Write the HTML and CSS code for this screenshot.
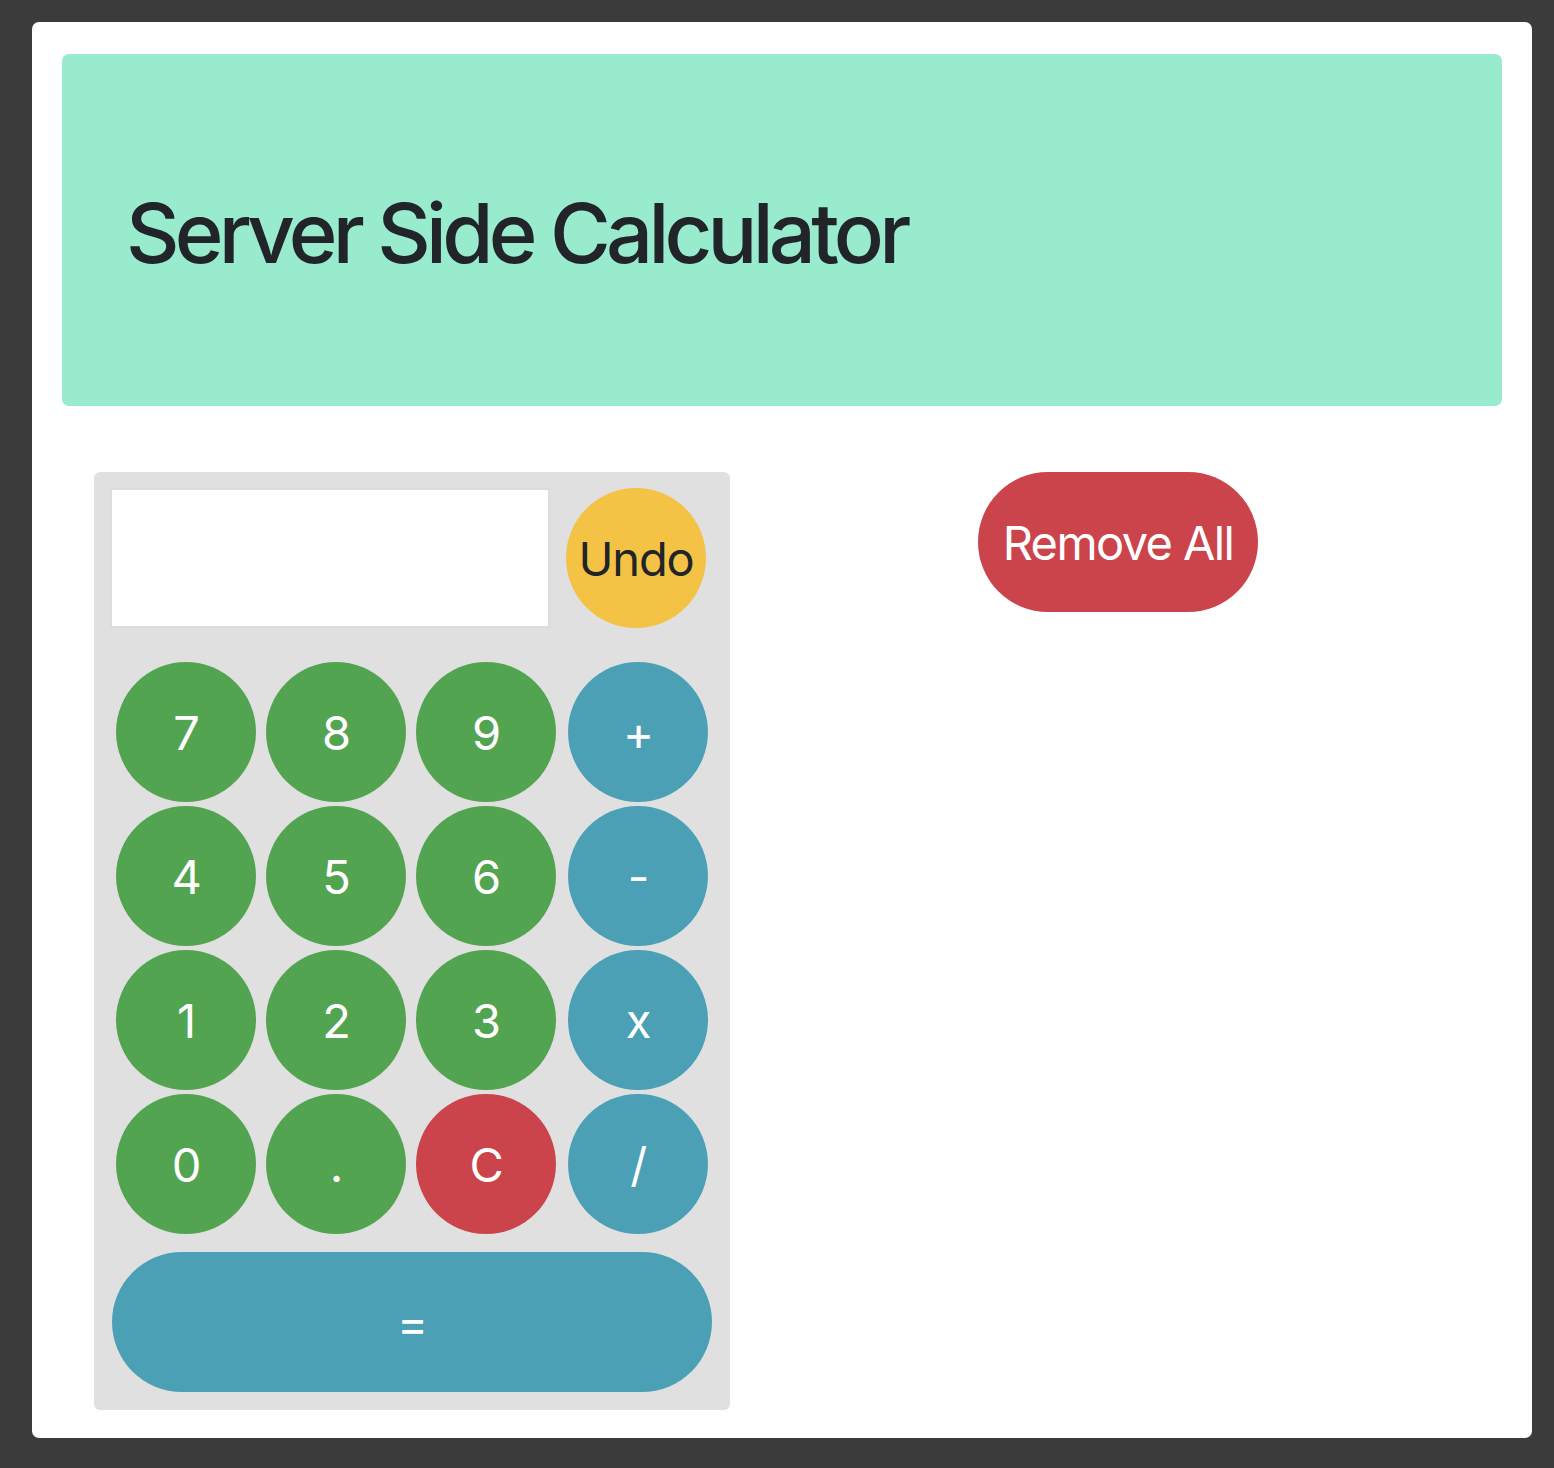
FILE: index.html
```html
<!DOCTYPE html>
<html lang="en">
<head>
<meta charset="utf-8">
<title>Server Side Calculator</title>
<link rel="stylesheet" href="styles.css">
</head>
<body>
<div class="page">
  <header class="jumbotron">
    <h1 class="title">Server Side Calculator</h1>
  </header>
  <main class="content">
    <section class="calc">
      <div class="top-row">
        <input class="display" type="text" aria-label="display">
        <button class="btn circle yellow">Undo</button>
      </div>
      <div class="keys">
        <button class="btn circle green">7</button>
        <button class="btn circle green">8</button>
        <button class="btn circle green">9</button>
        <button class="btn circle blue">+</button>
        <button class="btn circle green">4</button>
        <button class="btn circle green">5</button>
        <button class="btn circle green">6</button>
        <button class="btn circle blue">-</button>
        <button class="btn circle green">1</button>
        <button class="btn circle green">2</button>
        <button class="btn circle green">3</button>
        <button class="btn circle blue">x</button>
        <button class="btn circle green">0</button>
        <button class="btn circle green">.</button>
        <button class="btn circle red">C</button>
        <button class="btn circle blue">/</button>
      </div>
      <button class="btn pill blue equals">=</button>
    </section>
    <section class="side">
      <button class="btn pill red remove">Remove All</button>
    </section>
  </main>
</div>
</body>
</html>
```

FILE: styles.css
```css
* { box-sizing: border-box; }
html, body { margin: 0; padding: 0; }
body {
  background: #3b3b3b;
  font-family: Inter, "Liberation Sans", sans-serif;
  padding: 22px 22px 30px 32px;
}
.page {
  width: 1500px;
  height: 1416px;
  background: #ffffff;
  border-radius: 7px;
  padding: 32px 30px 0 30px;
}
.jumbotron {
  height: 352px;
  background: #98ebcd;
  border-radius: 7px;
  display: flex;
  align-items: center;
  padding-left: 64px;
}
.title {
  margin: 0;
  font-size: 83px;
  font-weight: 500;
  color: #212529;
  letter-spacing: -4.8px;
  line-height: 1;
  padding-top: 6px;
}
.content {
  display: flex;
  margin-top: 66px;
  padding-left: 32px;
}
.calc {
  width: 636px;
  height: 938px;
  background: #e0e0e0;
  border-radius: 6px;
  padding: 16px 18px 18px 16px;
}
.top-row {
  display: flex;
  gap: 16px;
}
.display {
  width: 440px;
  height: 140px;
  border: 2px solid #dcdcdc;
  background: #fff;
  outline: 1px solid #fff;
  outline-offset: -3px;
  margin: 0;
  padding: 0;
}
.btn {
  border: none;
  margin: 0;
  padding: 0;
  font-family: Inter, "Liberation Sans", sans-serif;
  font-size: 47px;
  letter-spacing: -1.2px;
  color: #ffffff;
  display: flex;
  align-items: center;
  justify-content: center;
}
.circle {
  width: 140px;
  height: 140px;
  border-radius: 50%;
}
.pill {
  height: 140px;
  border-radius: 70px;
}
.green { background: #53a450; }
.blue { background: #4ba0b6; }
.red { background: #cb444b; }
.yellow { background: #f4c244; color: #212529; }
.keys {
  display: grid;
  grid-template-columns: repeat(3, 140px) 142px;
  justify-items: end;
  column-gap: 10px;
  row-gap: 4px;
  margin-top: 34px;
  margin-left: 6px;
}
.equals {
  width: 600px;
  margin-top: 18px;
  margin-left: 2px;
}
.side {
  padding-left: 248px;
}
.remove {
  width: 280px;
  letter-spacing: -1.6px;
}
```
